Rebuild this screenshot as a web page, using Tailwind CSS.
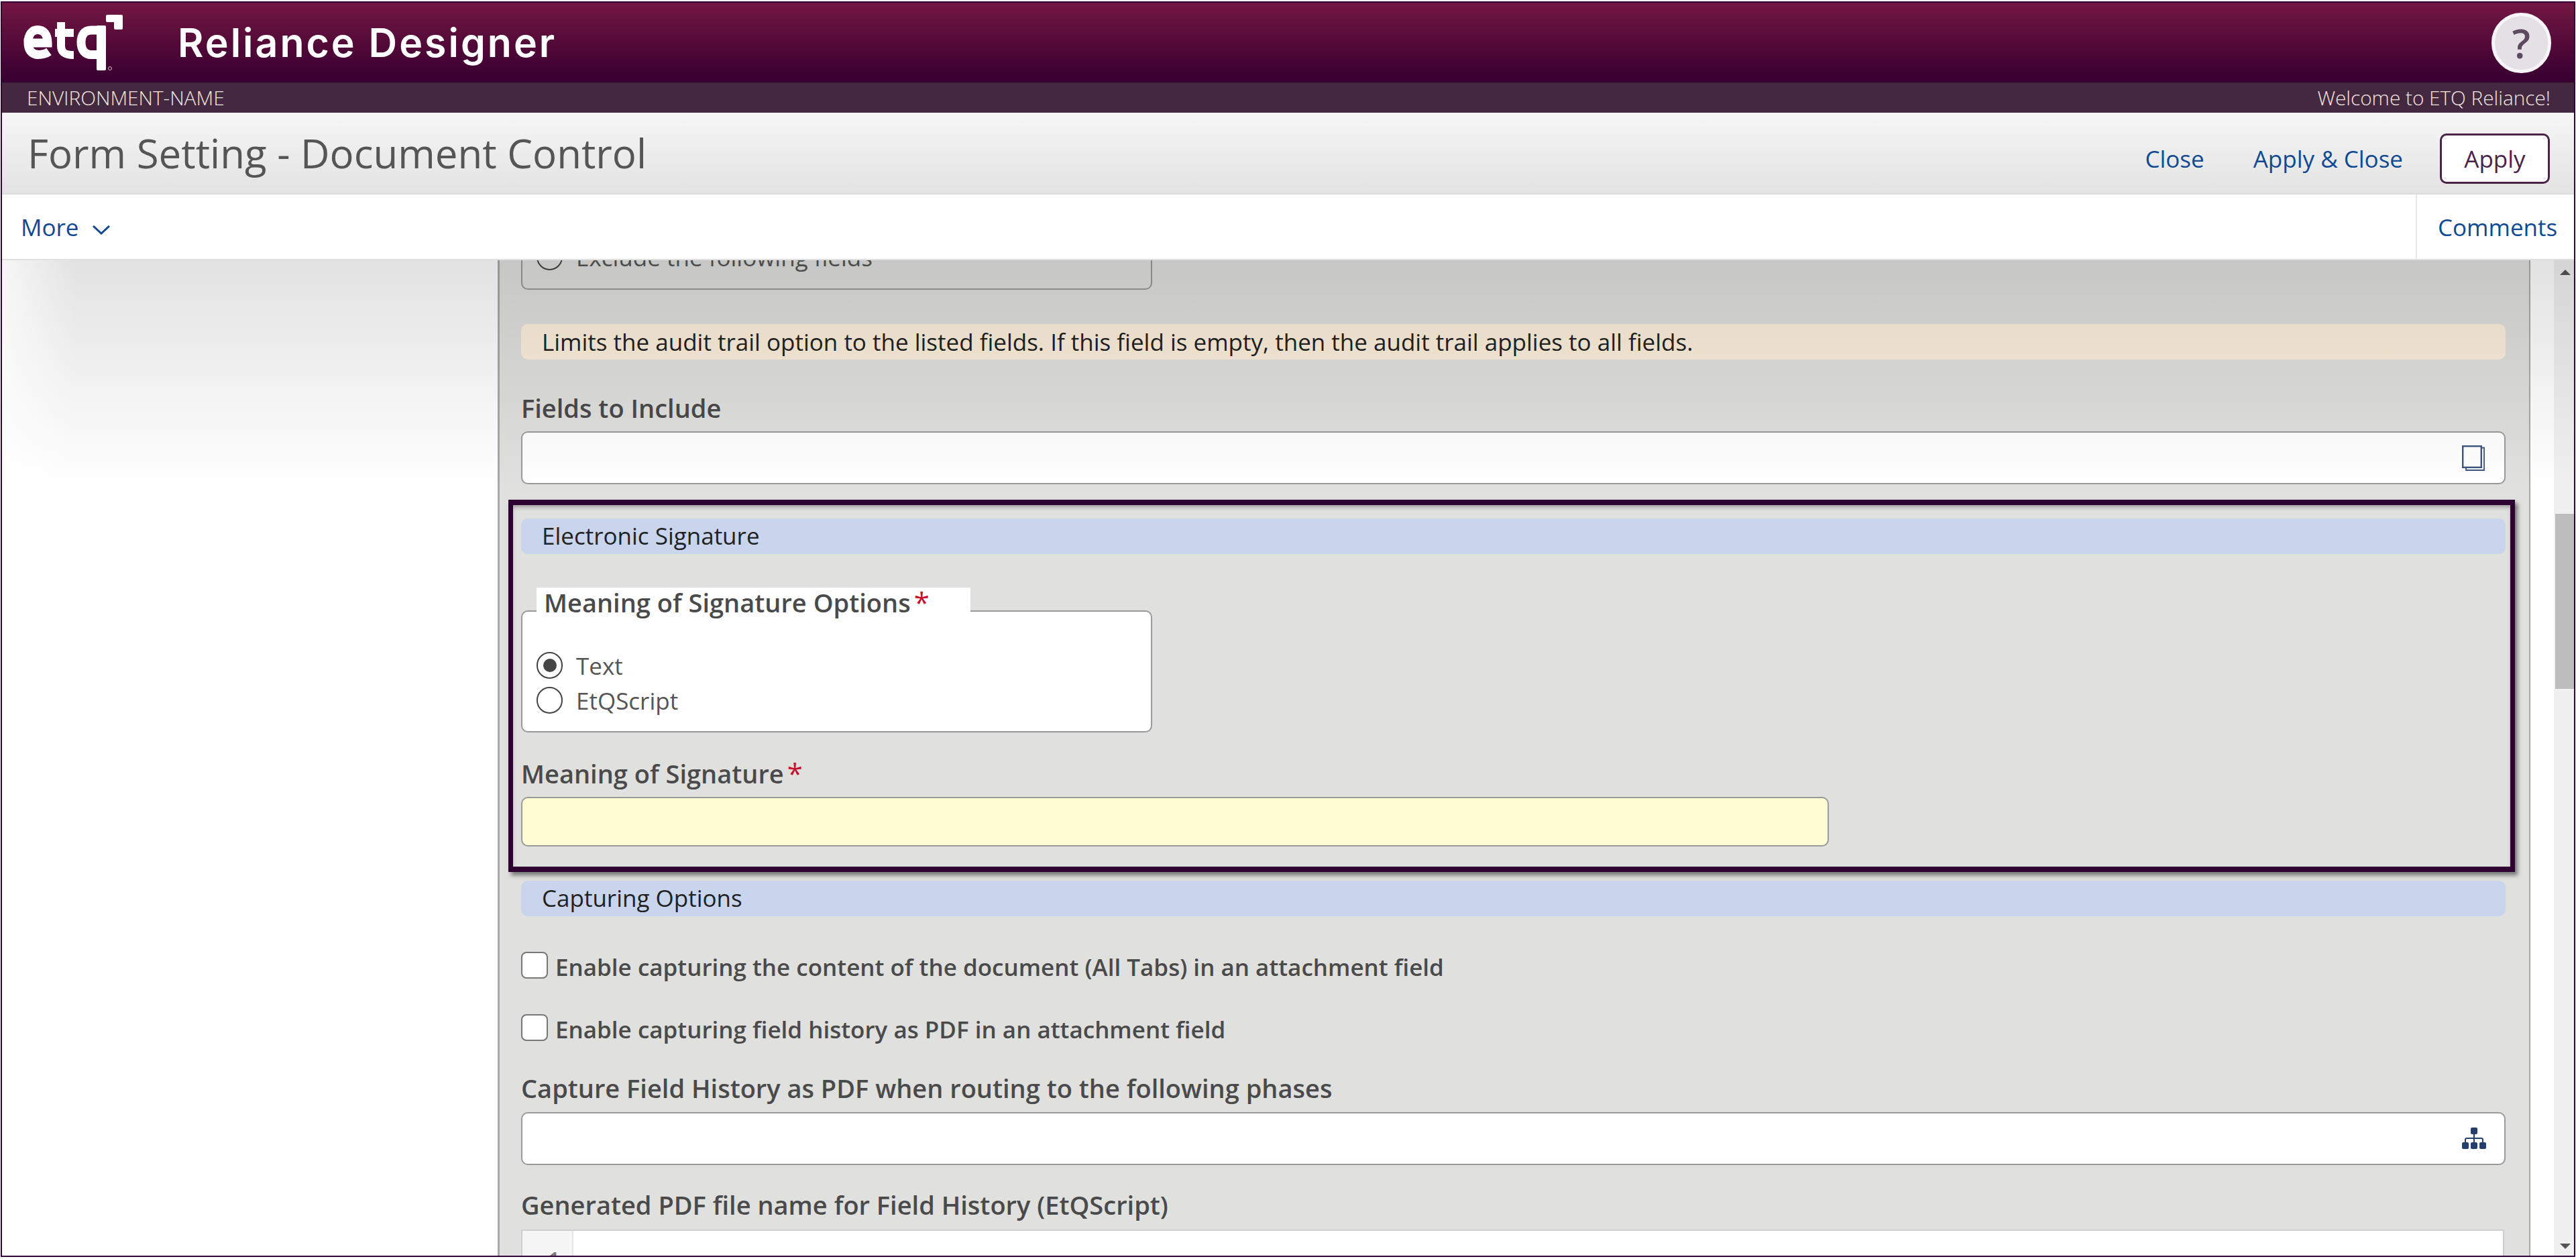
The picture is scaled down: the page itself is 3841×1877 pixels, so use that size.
<!DOCTYPE html>
<html lang="en">
<head>
<meta charset="utf-8">
<title>Form Setting - Document Control</title>
<script src="https://cdn.jsdelivr.net/npm/@tailwindcss/browser@4"></script>
</head>
<body class="h-screen w-screen overflow-hidden bg-white font-['Open_Sans',sans-serif]">
<div class="mt-[2px] ml-px flex h-[1872px] w-[3839px] flex-col overflow-hidden border-2 border-[#33043a]">
  <header class="flex h-[119px] shrink-0 items-center justify-between bg-linear-to-b from-[#741742] to-[#36002f]">
    <div class="flex items-center">
      <svg width="200" height="119" viewBox="3 4 200 119" fill="none" stroke="#fff" stroke-width="13">
        <path d="M42 64 C42 51 48 44.5 56 44.5 C65 44.5 71 51 71 64 H42 C42 75 48 81.5 57 81.5 C63 81.5 68 80.5 73 77"/>
        <path d="M91 33 V68 C91 78 96 82 110 82 M82 49 H110" stroke-width="12"/>
        <path d="M151 45 H136 C126 45 121 52 121 63 C121 75 127 81.5 136 81.5 H151"/>
        <rect x="144" y="38" width="14" height="67" rx="2" fill="#fff" stroke="none"/>
        <path d="M160 22 H181 A2 2 0 0 1 183 24 V42 A2 2 0 0 1 181 44 H172 A2 2 0 0 1 170 42 V33 H160 A2 2 0 0 1 158 31 V24 A2 2 0 0 1 160 22 Z" fill="#fff" stroke="none"/>
        <circle cx="164" cy="102" r="2.5" stroke-width="1" stroke="#cdb9c8"/>
      </svg>
      <h1 class="ml-[62px] font-['Inter',sans-serif] text-[59px] font-semibold leading-none tracking-[3px] text-white">Reliance Designer</h1>
    </div>
    <button class="mr-[34px] flex h-[90px] w-[89px] items-center justify-center rounded-full border-[5px] border-[#f7f5f7] bg-[#e5dfe6] text-[60px] font-semibold leading-none text-[#5c4a61]">?</button>
  </header>

  <div class="flex h-[45px] shrink-0 items-center justify-between bg-[#43283f] pr-[35px] pl-[37px] text-[29.75px] font-light leading-none text-[#f2e6e3]">
    <span>ENVIRONMENT-NAME</span>
    <span>Welcome to ETQ Reliance!</span>
  </div>

  <div class="flex h-[122px] shrink-0 items-center justify-between border-b-2 border-[#dcdcdc] bg-linear-to-b from-[#f6f6f6] to-[#e3e3e3] pr-[36px] pl-[38px]">
    <h2 class="text-[60px] font-normal leading-none text-[#555]">Form Setting - Document Control</h2>
    <div class="mt-[16px] flex items-center text-[35px] leading-none text-[#0f4a92]">
      <a>Close</a>
      <a class="ml-[73px]">Apply &amp; Close</a>
      <button class="ml-[55px] h-[75px] w-[164px] rounded-[10px] border-[3px] border-[#4b2349] bg-white text-[#4b2349]">Apply</button>
    </div>
  </div>

  <nav class="flex h-[98px] shrink-0 items-stretch justify-between border-b-2 border-[#e0e0e0] bg-white text-[35px] leading-none text-[#0f4a92]">
    <div class="flex items-center pl-[28px]">
      <span>More</span>
      <svg class="mt-[10px] ml-[20px]" width="26" height="14" viewBox="0 0 26 14" fill="none" stroke="#0f4a92" stroke-width="3"><path d="M1 1 L13 12 L25 1"/></svg>
    </div>
    <div class="flex w-[236px] items-center border-l-2 border-[#e6e6e6] pl-[31px]">Comments</div>
  </nav>

  <div class="relative flex min-h-0 flex-1">
    <aside class="w-[739px] shrink-0 bg-white"></aside>

    <main class="w-[3031px] shrink-0 overflow-hidden border-r-2 border-l-[3px] border-r-[#aaa8a4] border-l-[#aaa8a4] bg-[#e0e0de] pr-[35px] pl-[32px]">
      <div class="-mt-[76px] h-[120px] w-[941px] rounded-[10px] border-2 border-[#999] pt-[50px] pl-[21px]">
        <label class="flex h-[39px] items-center gap-[20px] text-[35px] leading-none text-[#555]">
          <span class="h-[39px] w-[39px] rounded-full border-2 border-[#444]"></span>Exclude the following fields
        </label>
      </div>

      <div class="mt-[51px] flex h-[53px] items-center rounded-[10px] bg-[#fdf0dc] pl-[31px] text-[35px] leading-none text-[#222]">Limits the audit trail option to the listed fields. If this field is empty, then the audit trail applies to all fields.</div>

      <div class="mt-[49px] h-[46px] text-[38px] font-semibold leading-[46px] text-[#4a4a4a]">Fields to Include</div>
      <div class="mt-[12px] flex h-[79px] items-center justify-end rounded-[10px] border-2 border-[#9a9a9a] bg-white pr-[29px]">
        <svg width="34" height="38" viewBox="0 0 34 38" fill="none" stroke="#3c5580"><path d="M28.5 3.5 H33 V37 H6 V33.5" stroke-width="1.8"/><rect x="1.2" y="1.2" width="27.6" height="31.6" stroke-width="2.4"/></svg>
      </div>

      <section class="-mr-[14px] -ml-[19px] mt-[23px] h-[555px] border-x-[7px] border-y-[8px] border-[#2f0032] px-[12px] pt-[20px] pr-[7px] shadow-[4px_5px_6px_#777,inset_0_5px_6px_-2px_#999]">
        <div class="flex h-[53px] items-center rounded-[10px] bg-[#c8d5ec] pb-[2px] pl-[31px] text-[35px] leading-none text-[#222]">Electronic Signature</div>

        <div class="relative mt-[84px] h-[182px] w-[941px] rounded-[10px] border-2 border-[#999] bg-white pt-[60px] pl-[21px]">
          <div class="absolute -top-[36px] left-[21px] flex h-[44px] w-[647px] items-center gap-[5px] bg-white pl-[11px] text-[38px] font-semibold leading-none text-[#4a4a4a]">
            Meaning of Signature Options<span class="text-[42px] font-normal text-[#c8102e]">*</span>
          </div>
          <div class="flex flex-col gap-[12px] text-[35px] leading-none text-[#555]">
            <label class="flex h-[40px] items-center gap-[20px]">
              <span class="flex h-[40px] w-[39px] items-center justify-center rounded-full border-2 border-[#444]"><span class="h-[20px] w-[20px] rounded-full bg-[#444]"></span></span>Text
            </label>
            <label class="flex h-[40px] items-center gap-[20px]">
              <span class="h-[40px] w-[39px] rounded-full border-2 border-[#444]"></span>EtQScript
            </label>
          </div>
        </div>

        <div class="mt-[38px] flex h-[46px] items-center gap-[5px] text-[38px] font-semibold leading-[46px] text-[#4a4a4a]">Meaning of Signature<span class="text-[42px] font-normal text-[#c8102e]">*</span></div>
        <div class="mt-[12px] h-[74px] w-[1950px] rounded-[10px] border-2 border-[#9a9a9a] bg-[#fefcd2]"></div>
      </section>

      <div class="mt-[13px] flex h-[53px] items-center rounded-[10px] bg-[#c8d5ec] pb-[2px] pl-[31px] text-[35px] leading-none text-[#222]">Capturing Options</div>

      <label class="mt-[53px] flex h-[40px] items-start gap-[11px]">
        <span class="h-[40px] w-[40px] rounded-[8px] border-2 border-[#777] bg-white"></span>
        <span class="pt-[3px] text-[35px] font-semibold leading-[40px] text-[#4a4a4a]">Enable capturing the content of the document (All Tabs) in an attachment field</span>
      </label>
      <label class="mt-[53px] flex h-[40px] items-start gap-[11px]">
        <span class="h-[40px] w-[40px] rounded-[8px] border-2 border-[#777] bg-white"></span>
        <span class="pt-[3px] text-[35px] font-semibold leading-[40px] text-[#4a4a4a]">Enable capturing field history as PDF in an attachment field</span>
      </label>

      <div class="mt-[47px] h-[46px] text-[38px] font-semibold leading-[46px] text-[#4a4a4a]">Capture Field History as PDF when routing to the following phases</div>
      <div class="mt-[13px] flex h-[79px] items-center justify-end rounded-[10px] border-2 border-[#9a9a9a] bg-white pr-[27px]">
        <svg width="36" height="33" viewBox="0 0 36 33" fill="#253f6d"><rect x="13" y="0" width="10" height="10" rx="2"/><rect x="0" y="22" width="10" height="10" rx="2"/><rect x="13" y="22" width="10" height="10" rx="2"/><rect x="26" y="22" width="10" height="10" rx="2"/><path d="M18 10 V22 M5 22 V18 A2 2 0 0 1 7 16 H29 A2 2 0 0 1 31 18 V22" fill="none" stroke="#253f6d" stroke-width="2"/></svg>
      </div>

      <div class="mt-[36px] h-[46px] text-[38px] font-semibold leading-[46px] text-[#4a4a4a]">Generated PDF file name for Field History (EtQScript)</div>
      <div class="mt-[14px] flex h-[120px] w-[2957px] border-2 border-[#cfcfcf] bg-white">
        <div class="h-full w-[76px] border-r-2 border-[#e6e6e6] bg-[#f5f5f5] pt-[28px] pr-[18px] text-right text-[30px] font-semibold leading-none text-[#777]">1</div>
      </div>
    </main>

    <div class="w-[35px] shrink-0 bg-white"></div>

    <div class="flex w-[30px] shrink-0 flex-col bg-[#f0f0f0]">
      <svg class="mt-[14px] ml-[9px] shrink-0" width="16" height="8" viewBox="0 0 16 8" fill="#555"><path d="M8 0 L16 8 H0 Z"/></svg>
      <div class="mt-[356px] ml-[2px] h-[261px] w-[28px] shrink-0 bg-[#bdbdbd]"></div>
      <svg class="mt-auto mb-[10px] ml-[9px] shrink-0" width="16" height="8" viewBox="0 0 16 8" fill="#555"><path d="M0 0 H16 L8 8 Z"/></svg>
    </div>

    <div class="pointer-events-none absolute inset-x-0 top-0 h-[340px] bg-linear-to-b from-[#0000001d] to-[#00000000]"></div>
    <div class="pointer-events-none absolute top-0 left-0 h-[340px] w-[110px] bg-linear-to-r from-[#ffffffb0] to-[#ffffff00]"></div>
  </div>
</div>
</body>
</html>
